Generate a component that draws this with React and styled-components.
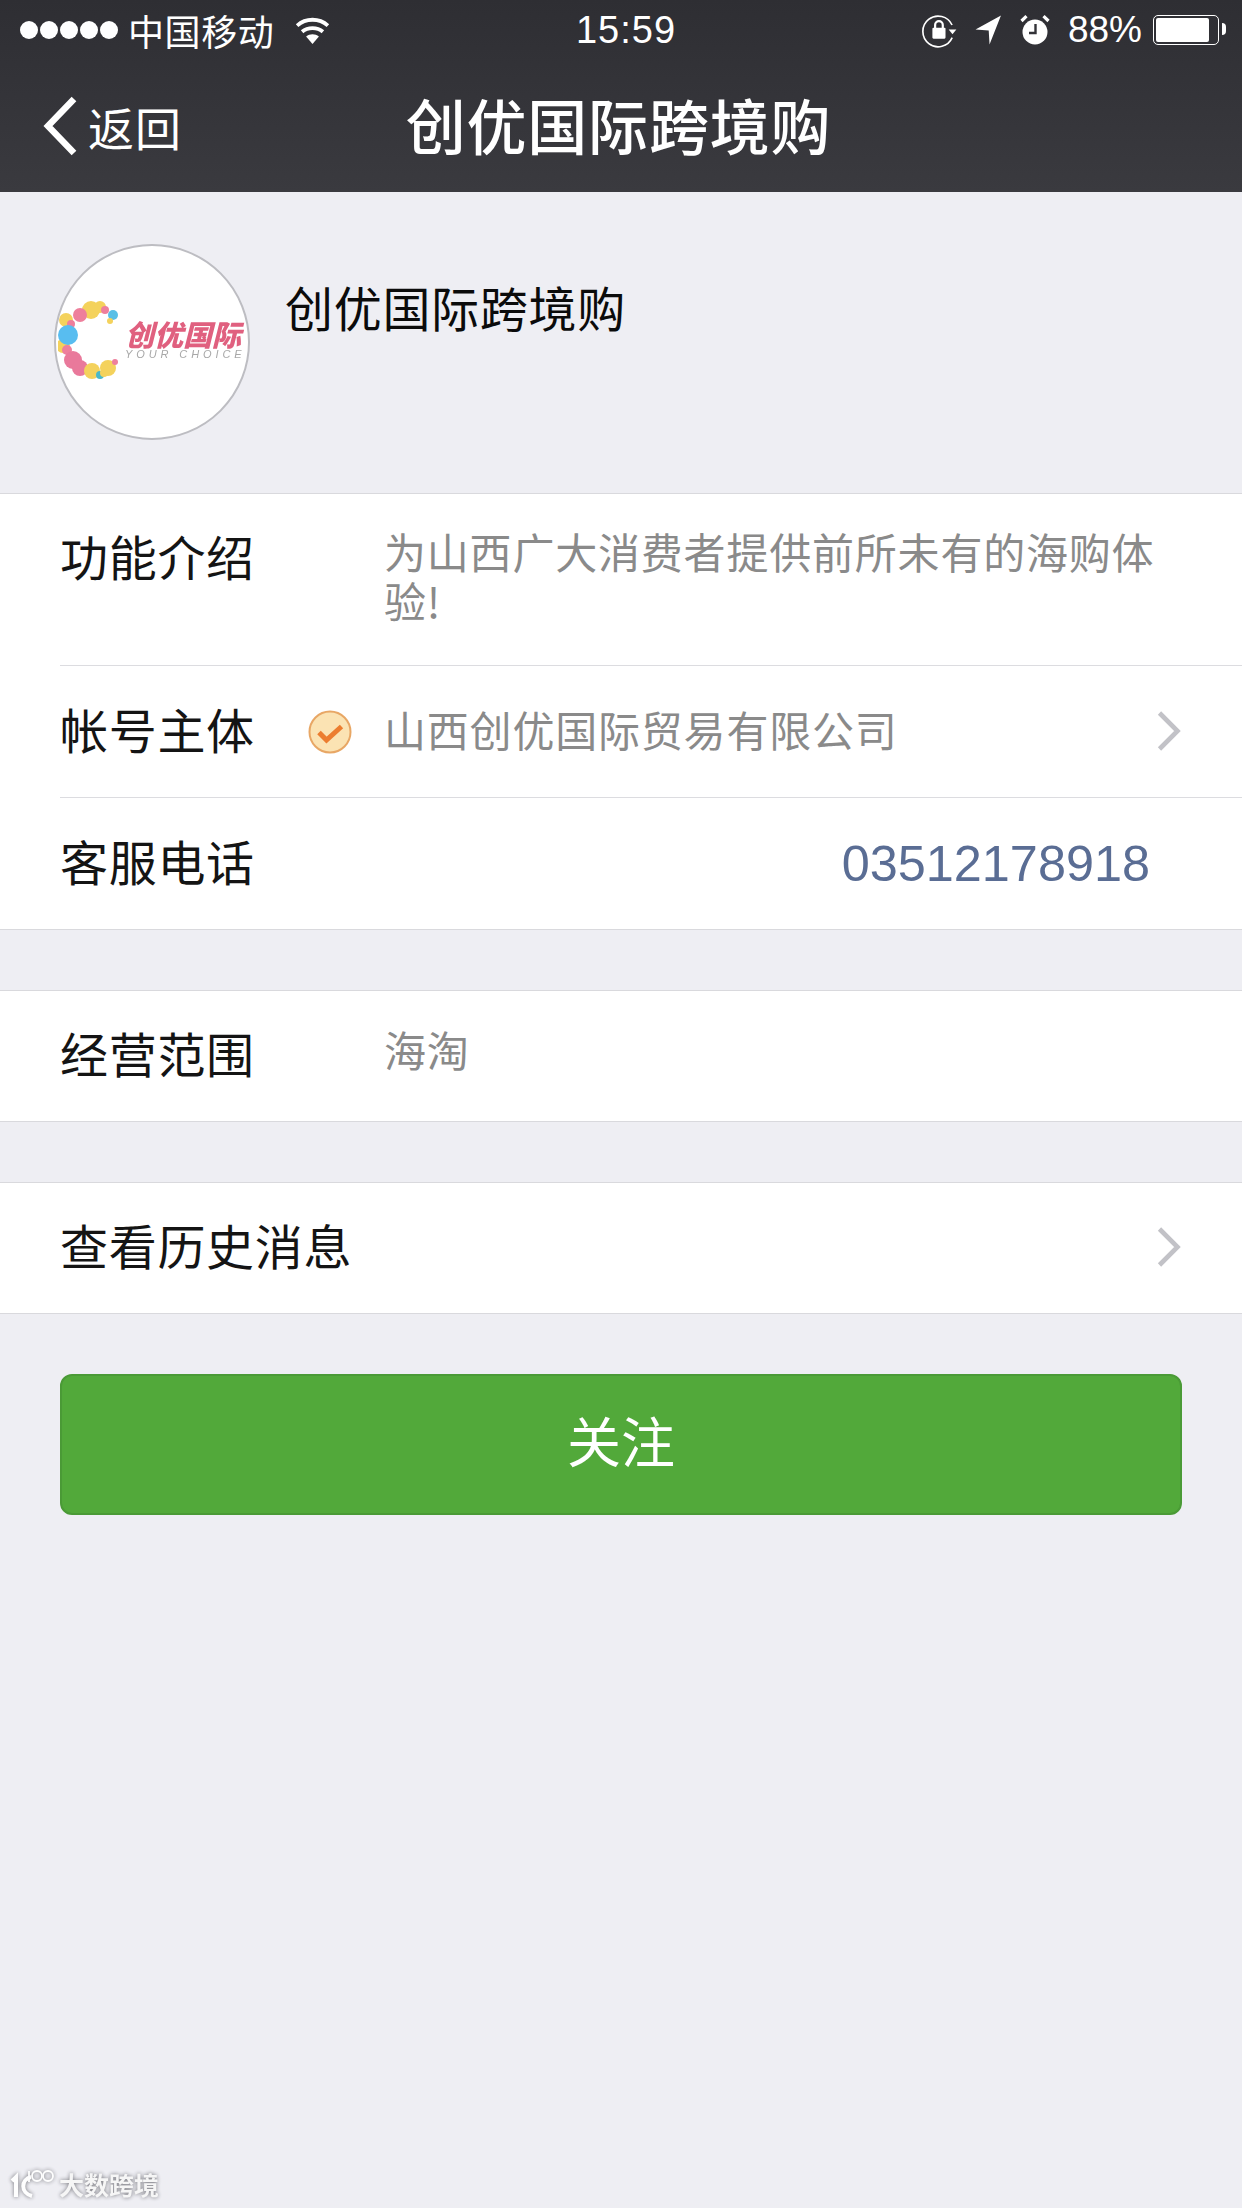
import React from "react";
import styled, { createGlobalStyle } from "styled-components";

const GlobalStyle = createGlobalStyle`
  html, body {
    margin: 0;
    padding: 0;
    background: #eeeef3;
  }
  * { box-sizing: border-box; }
`;

const CJK = `"Noto Sans CJK SC", "Noto Sans", sans-serif`;
const LATIN = `"Liberation Sans", "Noto Sans CJK SC", sans-serif`;

const WifiIcon = () => (
  <svg width="37" height="30" viewBox="0 0 36 30">
    <path d="M18 29 L11.6 21.6 C15.2 18.6 20.8 18.6 24.4 21.6 Z" fill="#fff" />
    <path d="M7.6 16.8 C13.4 11.8 22.6 11.8 28.4 16.8" fill="none" stroke="#fff" strokeWidth="3.8" />
    <path d="M2.6 10.6 C11.4 2.8 24.6 2.8 33.4 10.6" fill="none" stroke="#fff" strokeWidth="3.8" />
  </svg>
);

const LockIcon = () => (
  <svg width="35" height="35" viewBox="0 0 32 32">
    <path d="M27.5 11 A14 14 0 1 0 27.6 22.5" fill="none" stroke="#fff" strokeWidth="1.5" />
    <path d="M24.4 15 H31.4 L27.9 19.4 Z" fill="#fff" />
    <rect x="9.5" y="13.5" width="12" height="10" rx="1" fill="#fff" />
    <path d="M12 14 V11 A3.5 3.5 0 0 1 19 11 V14" fill="none" stroke="#fff" strokeWidth="2" />
  </svg>
);

const LocationIcon = () => (
  <svg width="27" height="32" viewBox="0 0 26 30">
    <path d="M25 1 L14 29 L13.2 15.6 L0.5 14.6 Z" fill="#fff" />
  </svg>
);

const AlarmIcon = () => (
  <svg width="30" height="32" viewBox="0 0 30 32">
    <circle cx="15" cy="18" r="12.5" fill="#fff" />
    <path d="M15.5 10 V19 H9" fill="none" stroke="#333338" strokeWidth="2.4" />
    <path d="M1.5 7 L6.5 2.2 M28.5 7 L23.5 2.2" stroke="#fff" strokeWidth="3.2" />
  </svg>
);

const ChevronIcon = () => (
  <svg width="26" height="42" viewBox="0 0 26 42">
    <path d="M3.5 3 L21.5 21 L3.5 39" fill="none" stroke="#c2c2c7" strokeWidth="4.6" />
  </svg>
);

const BackIcon = () => (
  <svg width="36" height="60" viewBox="0 0 36 60">
    <path d="M32 3 L6 30 L32 57" fill="none" stroke="#fff" strokeWidth="6.5" />
  </svg>
);

const VerifiedIcon = () => (
  <svg width="44" height="44" viewBox="0 0 44 44">
    <circle cx="22" cy="22" r="20.5" fill="#fbe3b3" stroke="#e8a765" strokeWidth="2" />
    <path d="M11 22.5 L18.5 30 L33.5 16.5" fill="none" stroke="#ec7d2f" strokeWidth="5" />
  </svg>
);

// the brand mark is a ring of coloured dots, x y radius colour
const dots = [
  [8, 20, 7, "#f4d25c"], [33, 10, 9, "#f4d25c"], [42, 7, 6, "#f4d25c"], [22, 15, 7, "#ee7f9c"],
  [47, 10, 4, "#ee7f9c"], [55, 15, 5, "#59bfe6"], [52, 21, 3, "#f4d25c"], [13, 24, 4, "#ee7f9c"],
  [5, 46, 7, "#f4d25c"], [10, 35, 10, "#58bdf0"], [9, 50, 5, "#ee7f9c"], [15, 60, 9, "#e9799b"],
  [22, 68, 8, "#e9799b"], [34, 71, 8, "#f4d25c"], [42, 75, 4, "#49b8c9"], [50, 68, 8, "#f4d25c"],
  [57, 62, 3, "#ee7f9c"], [46, 73, 4, "#f4d25c"],
];

const BrandRing = () => (
  <svg width="60" height="79" viewBox="0 0 60 79">
    {dots.map(([cx, cy, r, fill], i) => (
      <circle key={i} cx={cx} cy={cy} r={r} fill={fill} />
    ))}
  </svg>
);

const WatermarkLogo = () => (
  <svg width="44" height="30" viewBox="0 0 44 30">
    <path d="M2 12 L6 8 V28" fill="none" stroke="#fff" strokeWidth="4" />
    <path d="M21 8 C11 10 10 24 22 27" fill="none" stroke="#fff" strokeWidth="4" />
    <path d="M19 2 V13" fill="none" stroke="#fff" strokeWidth="1.8" />
    <circle cx="27" cy="7" r="5" fill="none" stroke="#fff" strokeWidth="1.8" />
    <circle cx="38" cy="7" r="5" fill="none" stroke="#fff" strokeWidth="1.8" />
  </svg>
);

const App = () => {
  return (
    <Page>
      <GlobalStyle />
      <Header>
        <StatusBar>
          <StatusLeft>
            <Signal>
              {[0, 1, 2, 3, 4].map((i) => (
                <SignalDot key={i} />
              ))}
            </Signal>
            <Carrier>中国移动</Carrier>
            <WifiIcon />
          </StatusLeft>
          <Clock>15:59</Clock>
          <StatusRight>
            <LockIcon />
            <LocationIcon />
            <AlarmIcon />
            <Percent>88%</Percent>
            <Battery>
              <BatteryFill $level={88} />
            </Battery>
          </StatusRight>
        </StatusBar>
        <NavBar>
          <BackLink>
            <BackIcon />
            <BackText>返回</BackText>
          </BackLink>
          <NavTitle>创优国际跨境购</NavTitle>
        </NavBar>
      </Header>

      <Profile>
        <Avatar>
          <BrandRing />
          <BrandText>
            <BrandName>创优国际</BrandName>
            <BrandSub>YOUR CHOICE</BrandSub>
          </BrandText>
        </Avatar>
        <ProfileName>创优国际跨境购</ProfileName>
      </Profile>

      <Group>
        <Row $height={171} $align="flex-start">
          <Label $top={29}>功能介绍</Label>
          <Description>为山西广大消费者提供前所未有的海购体验!</Description>
        </Row>
        <Row>
          <Label>帐号主体</Label>
          <Badge>
            <VerifiedIcon />
          </Badge>
          <Value>山西创优国际贸易有限公司</Value>
          <Chevron>
            <ChevronIcon />
          </Chevron>
        </Row>
        <Row>
          <Label>客服电话</Label>
          <Phone>03512178918</Phone>
        </Row>
      </Group>

      <Group $gap>
        <Row>
          <Label>经营范围</Label>
          <Value $top={-16}>海淘</Value>
        </Row>
      </Group>

      <Group $gap>
        <Row>
          <Label>查看历史消息</Label>
          <Chevron>
            <ChevronIcon />
          </Chevron>
        </Row>
      </Group>

      <FollowButton>关注</FollowButton>

      <Watermark>
        <WatermarkLogo />
        <WatermarkText>大数跨境</WatermarkText>
      </Watermark>
    </Page>
  );
};

const Page = styled.div`
  position: relative;
  width: 1242px;
  height: 2208px;
  overflow: hidden;
  background: #eeeef3;
  font-family: ${CJK};
`;

const Header = styled.header`
  height: 192px;
  display: flex;
  flex-direction: column;
  color: #fff;
  background: linear-gradient(#2e2e33, #3a3a3f);
`;

const StatusBar = styled.div`
  height: 60px;
  display: grid;
  grid-template-columns: 1fr auto 1fr;
  align-items: center;
  padding: 0 23px 0 20px;
`;

const StatusLeft = styled.div`
  display: flex;
  align-items: center;
`;

const Signal = styled.div`
  display: flex;
  gap: 2px;
  margin-right: 10px;
`;

const SignalDot = styled.span`
  width: 18px;
  height: 18px;
  border-radius: 50%;
  background: #fff;
`;

const Carrier = styled.span`
  font-size: 36px;
  line-height: 60px;
  letter-spacing: 0.6px;
  margin-right: 20px;
`;

const Clock = styled.span`
  font-family: ${LATIN};
  font-size: 38px;
  letter-spacing: 1px;
  margin-left: 13px;
`;

const StatusRight = styled.div`
  display: flex;
  align-items: center;
  justify-content: flex-end;
  gap: 18px;
`;

const Percent = styled.span`
  font-family: ${LATIN};
  font-size: 37px;
  margin-right: -7px;
`;

const Battery = styled.div`
  position: relative;
  width: 66px;
  height: 30px;
  padding: 2px;
  border: 1.5px solid #fff;
  border-radius: 5px;

  &::after {
    content: "";
    position: absolute;
    right: -8px;
    top: 7px;
    width: 4px;
    height: 12px;
    background: #fff;
    border-radius: 0 4px 4px 0;
  }
`;

const BatteryFill = styled.div`
  width: ${(props) => props.$level}%;
  height: 100%;
  background: #fff;
  border-radius: 2px;
`;

const NavBar = styled.nav`
  position: relative;
  flex: 1;
  display: flex;
  align-items: center;
  justify-content: center;
  padding-bottom: 5px;
`;

const BackLink = styled.div`
  position: absolute;
  left: 42px;
  top: 36px;
  display: flex;
  align-items: center;
  gap: 10px;
`;

const BackText = styled.span`
  font-size: 46px;
  line-height: 60px;
  letter-spacing: 1px;
`;

const NavTitle = styled.h1`
  margin: 0 5px 0 0;
  font-size: 60px;
  line-height: 80px;
  font-weight: 500;
  letter-spacing: 0.8px;
`;

const Profile = styled.section`
  height: 301px;
  display: flex;
  align-items: flex-start;
  padding: 52px 0 0 54px;
`;

const Avatar = styled.div`
  width: 196px;
  height: 196px;
  flex: none;
  display: flex;
  align-items: center;
  border-radius: 50%;
  background: #fff;
  border: 2px solid #bdbdc2;
  overflow: hidden;
  padding: 0 0 6px 2px;

  svg {
    filter: blur(0.7px);
  }
`;

const BrandText = styled.div`
  display: flex;
  flex-direction: column;
  margin-left: 7px;
  filter: blur(0.4px);
`;

const BrandName = styled.span`
  font-size: 29px;
  line-height: 30px;
  font-weight: 900;
  font-style: italic;
  color: #e0607f;
  white-space: nowrap;
`;

const BrandSub = styled.span`
  font-family: ${LATIN};
  font-size: 11px;
  line-height: 12px;
  letter-spacing: 3.9px;
  font-style: italic;
  color: #a8a8a8;
  white-space: nowrap;
`;

const ProfileName = styled.div`
  margin: 27px 0 0 35px;
  font-size: 48px;
  line-height: 70px;
  letter-spacing: 0.7px;
  color: #0b0b0b;
`;

const Group = styled.section`
  margin-top: ${(props) => (props.$gap ? "60px" : "0")};
  background: #fff;
  border-top: 1px solid #d9d9dd;
  border-bottom: 1px solid #d9d9dd;
`;

const Row = styled.div`
  position: relative;
  height: ${(props) => props.$height || 130}px;
  margin-left: 60px;
  padding-right: 60px;
  display: flex;
  align-items: ${(props) => props.$align || "center"};

  & + & {
    border-top: 1px solid #dcdce0;
    height: 132px;
  }
`;

const Label = styled.div`
  width: 324px;
  flex: none;
  margin-top: ${(props) => props.$top ?? -8}px;
  font-size: 48px;
  line-height: 64px;
  letter-spacing: 0.7px;
  color: #141414;
  white-space: nowrap;
`;

const Badge = styled.span`
  position: absolute;
  left: 248px;
  top: 44px;
  display: flex;
`;

const Description = styled.div`
  flex: 1;
  margin-top: 32px;
  padding-right: 6px;
  font-size: 42px;
  line-height: 49px;
  letter-spacing: 0.8px;
  color: #8a8a8a;
`;

const Value = styled.div`
  flex: 1;
  margin-top: ${(props) => props.$top ?? -6}px;
  font-size: 42px;
  letter-spacing: 0.8px;
  color: #8a8a8a;
`;

const Phone = styled.div`
  margin-left: auto;
  margin-right: 32px;
  font-family: ${LATIN};
  font-size: 50.4px;
  color: #5a6d94;
`;

const Chevron = styled.span`
  margin-left: auto;
  margin-top: -2px;
  display: flex;
`;

const FollowButton = styled.button`
  display: block;
  width: 1122px;
  height: 141px;
  margin: 60px 0 0 60px;
  padding: 0 0 10px;
  border: 2px solid #4a9a36;
  border-radius: 12px;
  background: #52a93a;
  color: #fff;
  font-family: ${CJK};
  font-size: 54px;
`;

const Watermark = styled.div`
  position: absolute;
  left: 10px;
  bottom: 6px;
  display: flex;
  align-items: center;
  gap: 5px;
  opacity: 0.95;
  filter: drop-shadow(0 0 2px #6e6e74);
`;

const WatermarkText = styled.span`
  font-size: 25px;
  font-weight: 700;
  color: #f7f7f7;
`;

export default App;
